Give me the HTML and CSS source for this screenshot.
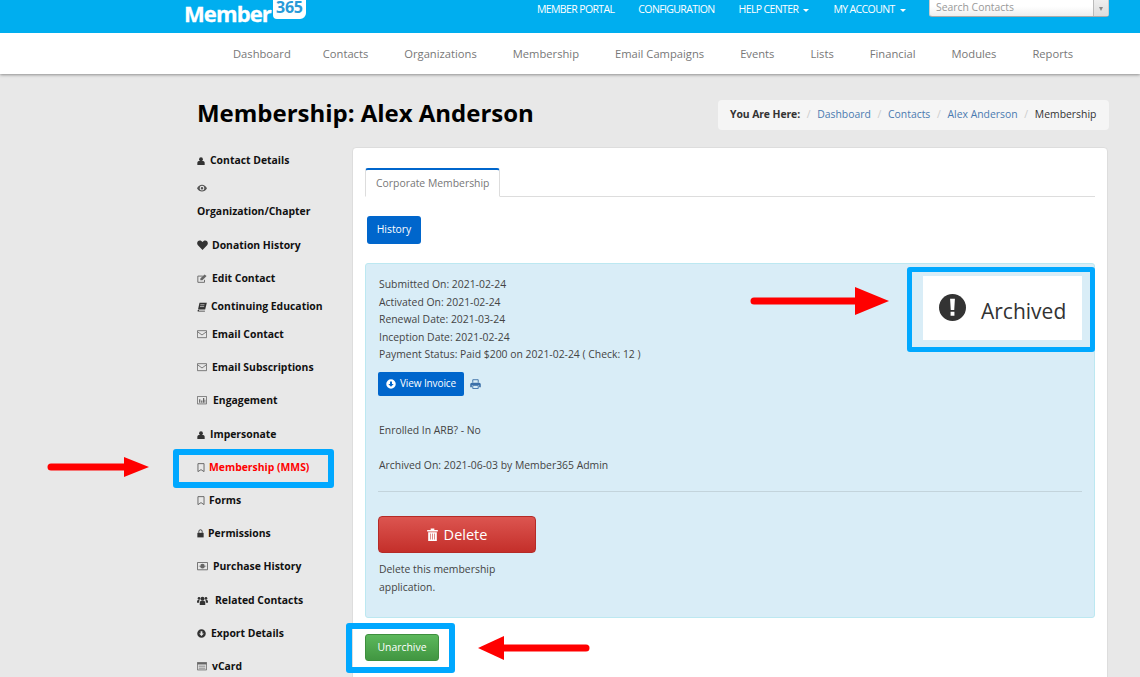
FILE: index.html
```html
<!DOCTYPE html>
<html lang="en">
  <head>
    <meta charset="UTF-8" />
    <title>Membership: Alex Anderson</title>
    <link rel="stylesheet" href="styles.css">
  </head>
  <body>
    <!-- Top bar -->
    <header class="topbar">
      <div class="logo">
        <span class="logo-word">Member</span>
        <span class="logo-badge">365</span>
      </div>
      <ul class="top-links">
        <li>MEMBER PORTAL</li>
        <li>CONFIGURATION</li>
        <li>HELP CENTER <span class="caret"></span></li>
        <li>MY ACCOUNT <span class="caret"></span></li>
      </ul>
      <div class="search-box">
        <span class="search-text">Search Contacts</span>
        <span class="search-btn"><span class="search-caret"></span></span>
      </div>
    </header>

    <!-- Main nav -->
    <nav class="mainnav">
      <a class="first" href="#">Dashboard</a>
      <a href="#">Contacts</a>
      <a href="#">Organizations</a>
      <a href="#">Membership</a>
      <a href="#">Email Campaigns</a>
      <a href="#">Events</a>
      <a href="#">Lists</a>
      <a href="#">Financial</a>
      <a href="#">Modules</a>
      <a href="#">Reports</a>
    </nav>

    <main class="page">
      <div class="page-head">
        <h1>Membership: Alex Anderson</h1>
        <div class="breadcrumb">
          <strong>You Are Here:</strong>
          <span class="sep">/</span><a href="#">Dashboard</a>
          <span class="sep">/</span><a href="#">Contacts</a>
          <span class="sep">/</span><a href="#">Alex Anderson</a>
          <span class="sep">/</span><span>Membership</span>
        </div>
      </div>

      <div class="columns">
        <ul class="sidemenu">
          <li class="tight">
            <svg class="ico w8" viewBox="0 0 12 12"><circle cx="6" cy="3.400" r="2.900"/><path d="M.5 12V9c0-2 1.500-3 3-3h5c1.500 0 3 1 3 3v3z"/></svg>
            <span class="gap5">Contact Details</span>
          </li>
          <li class="stack">
            <svg class="ico w10 dim" viewBox="0 0 12 10"><path d="M0 5c1.500-2.500 3.500-4 6-4s4.500 1.500 6 4c-1.500 2.500-3.500 4-6 4S1.500 7.500 0 5zm6 2.800a2.800 2.800 0 1 0 0-5.600 2.800 2.800 0 0 0 0 5.600zM6 6.500a1.500 1.500 0 1 0 0-3 1.500 1.500 0 0 0 0 3z" fill-rule="evenodd"/></svg>
            <span>Organization/Chapter</span>
          </li>
          <li>
            <svg class="ico w11" viewBox="0 0 12 11"><path d="M6 10.800L1 5.800C-.8 3.500.5.500 3 .5c1.300 0 2.300.7 3 1.700.7-1 1.700-1.700 3-1.700 2.500 0 3.800 3 2 5.300z"/></svg>
            <span class="gap4">Donation History</span>
          </li>
          <li class="tight">
            <svg class="ico w10 grey" viewBox="0 0 12 11"><path d="M9 7v3H1V2.500h6" fill="none" stroke="currentColor" stroke-width="1.100"/><path d="M4 5.500l5-5 2.500 2-5 5H4z"/></svg>
            <span class="gap5">Edit Contact</span>
          </li>
          <li class="tight">
            <svg class="ico w10" viewBox="0 0 12 12"><path d="M3 .8h8.800L9.800 9H1.200zM.8 9.500V11.500h8.700v-1H2.500l-.2-1z"/><path d="M4 3.300h5M3.600 5.500h5" stroke="#e8e8e8" stroke-width=".8"/></svg>
            <span class="gap4">Continuing Education</span>
          </li>
          <li>
            <svg class="ico w10 grey" viewBox="0 0 12 10"><path d="M.5.800h11v8.400H.5zM.5 2l5.500 4 5.500-4" fill="none" stroke="currentColor"/></svg>
            <span class="gap5">Email Contact</span>
          </li>
          <li>
            <svg class="ico w10 grey" viewBox="0 0 12 10"><path d="M.5.800h11v8.400H.5zM.5 2l5.500 4 5.500-4" fill="none" stroke="currentColor"/></svg>
            <span class="gap5">Email Subscriptions</span>
          </li>
          <li class="loose">
            <svg class="ico w10 grey" viewBox="0 0 12 10"><path d="M.5.500h11v9H.5z" fill="none" stroke="currentColor"/><path d="M2.500 4h1.500v4H2.500zM5 5.500h1.500V8H5zM7.200 2.500h1.500V8H7.200zM9.200 4.500h.8V8h-.8z"/></svg>
            <span class="gap6">Engagement</span>
          </li>
          <li>
            <svg class="ico w8" viewBox="0 0 12 12"><circle cx="6" cy="3.400" r="2.900"/><path d="M.5 12V9c0-2 1.500-3 3-3h5c1.500 0 3 1 3 3v3z"/></svg>
            <span class="gap5">Impersonate</span>
          </li>
          <li class="active">
            <svg class="ico w8 grey" viewBox="0 0 10 12"><path d="M1.200.800h7.600v10L5 8.300 1.200 10.800z" fill="none" stroke="currentColor" stroke-width="1.200"/></svg>
            <span class="gap4">Membership (MMS)</span>
          </li>
          <li>
            <svg class="ico w8 grey" viewBox="0 0 10 12"><path d="M1.200.800h7.600v10L5 8.300 1.200 10.800z" fill="none" stroke="currentColor" stroke-width="1.200"/></svg>
            <span class="gap4">Forms</span>
          </li>
          <li>
            <svg class="ico w7" viewBox="0 0 10 12"><path d="M.5 5.500h9V12h-9z"/><path d="M2.600 5.500V3.500a2.400 2.400 0 0 1 4.800 0v2" fill="none" stroke="currentColor" stroke-width="1.300"/></svg>
            <span class="gap4">Permissions</span>
          </li>
          <li class="loose">
            <svg class="ico w11 grey" viewBox="0 0 12 9"><path d="M.5.500h11v8H.5z" fill="none" stroke="currentColor"/><circle cx="6" cy="4.500" r="2.500"/><path d="M2 4h1v1H2zM9 4h1v1H9z"/></svg>
            <span class="gap5">Purchase History</span>
          </li>
          <li>
            <svg class="ico w11" viewBox="0 0 12 10"><circle cx="6" cy="3" r="2.200"/><circle cx="2.200" cy="2.600" r="1.500"/><circle cx="9.800" cy="2.600" r="1.500"/><path d="M3 10V7c0-1 1-1.800 2-1.800h2c1 0 2 .8 2 1.800v3zM0 7.500V6c0-.8.700-1.500 1.500-1.500h1.200L2.200 7.500zM12 7.500V6c0-.8-.7-1.500-1.500-1.500H9.300l.5 3z"/></svg>
            <span class="gap7">Related Contacts</span>
          </li>
          <li>
            <svg class="ico w9" viewBox="0 0 12 12"><path d="M6 .3a5.700 5.700 0 1 1 0 11.400A5.700 5.700 0 0 1 6 .3zM4.800 3v3H2.800L6 9.300 9.200 6h-2V3z" fill-rule="evenodd"/></svg>
            <span class="gap5">Export Details</span>
          </li>
          <li>
            <svg class="ico w10 grey" viewBox="0 0 12 10"><path d="M.5.500h11v9H.5z" fill="none" stroke="currentColor"/><path d="M.5.500h11V3H.5zM2 4.500h8v1H2zM2 6.800h8v1H2z"/></svg>
            <span class="gap5">vCard</span>
          </li>
        </ul>

        <section class="panel">
          <div class="tabs">
            <span class="tab">Corporate Membership</span>
          </div>
          <a class="btn-history" href="#">History</a>

          <div class="info-box">
            <div class="status-card">
              <svg class="status-ico" viewBox="0 0 28 28"><circle cx="14" cy="14" r="14"/><path d="M11.500 5h5l-.7 11.500h-3.600zM12 18.500h4v4h-4z" fill="#fff"/></svg>
              <span class="status-text">Archived</span>
            </div>
            <p class="dates">
              Submitted On: 2021-02-24<br>
              Activated On: 2021-02-24<br>
              Renewal Date: 2021-03-24<br>
              Inception Date: 2021-02-24<br>
              Payment Status: Paid $200 on 2021-02-24 ( Check: 12 )
            </p>
            <div class="invoice-row">
              <a class="btn-invoice" href="#">
                <svg class="btn-ico" viewBox="0 0 12 12"><path d="M6 .3a5.700 5.700 0 1 1 0 11.400A5.700 5.700 0 0 1 6 .3zM4.800 3v3H2.800L6 9.300 9.200 6h-2V3z" fill-rule="evenodd"/></svg>
                View Invoice
              </a>
              <svg class="print-ico" viewBox="0 0 12 11"><path d="M3 4V.8h6V4M3 7h6v3.500H3z" fill="none" stroke="currentColor"/><path d="M2 4h8c1 0 1.800.8 1.800 1.800V9H10V6.500H2V9H.2V5.800C.2 4.800 1 4 2 4z"/></svg>
            </div>
            <p class="note enrolled">Enrolled In ARB? - No</p>
            <p class="note archived">Archived On: 2021-06-03 by Member365 Admin</p>
            <hr class="rule">
            <a class="btn-delete" href="#">
              <svg class="trash-ico" viewBox="0 0 12 14"><path d="M4 2V.5h4V2h3.800v1.800H.2V2zM1.300 4.600h9.400V14H1.300z" fill-rule="evenodd"/><path d="M3.800 6v6.500M6 6v6.500M8.200 6v6.500" stroke="#d0605a" stroke-width=".8"/></svg>
              Delete
            </a>
            <p class="delete-note">Delete this membership<br>application.</p>
          </div>

          <a class="btn-unarchive" href="#">Unarchive</a>
        </section>
      </div>
    </main>

    <!-- Annotations drawn over the screenshot -->
    <div class="mark mark-menu"></div>
    <div class="mark mark-status"></div>
    <div class="mark mark-unarchive"></div>
    <svg class="arrow arrow-menu" viewBox="0 0 102 22"><path d="M4 11h76" stroke="#f00" stroke-width="7" stroke-linecap="round"/><path d="M77 1l25 10-25 10z" fill="#f00"/></svg>
    <svg class="arrow arrow-status" viewBox="0 0 140 30"><path d="M4 15h106" stroke="#f00" stroke-width="7" stroke-linecap="round"/><path d="M105 1l34 14-34 14z" fill="#f00"/></svg>
    <svg class="arrow arrow-unarchive" viewBox="0 0 112 24"><path d="M108 12H26" stroke="#f00" stroke-width="7" stroke-linecap="round"/><path d="M26 0L0 12l26 12z" fill="#f00"/></svg>
  </body>
</html>
```

FILE: styles.css
```css
html, body {
  height: 677px;
  overflow: hidden;
}
body {
  font-family: "Open Sans", sans-serif;
  font-size: 10.4px;
  margin: 0;
  padding: 0;
  background: #e8e8e8;
  color: #333;
  position: relative;
}
a {
  text-decoration: none;
}

/* Top bar */
.topbar {
  display: flex;
  height: 33px;
  background: #00aeef;
  padding-left: 185px;
  padding-right: 31px;
  position: relative;
  z-index: 2;
}
.logo {
  display: flex;
  align-items: flex-start;
  width: 352px;
}
.logo-word {
  color: #fff;
  font-weight: 700;
  font-size: 22px;
  letter-spacing: -0.9px;
  line-height: 24px;
  margin-top: 1px;
  margin-left: -1px;
  -webkit-text-stroke: 0.3px #fff;
}
.logo-badge {
  background: #fff;
  color: #2a9ad8;
  font-weight: 700;
  font-size: 16px;
  line-height: 14px;
  height: 19px;
  margin-left: 2px;
  border-radius: 0 0 6px 4px;
  letter-spacing: -0.3px;
  width: 33px;
  text-align: center;
  box-sizing: border-box;
}
.top-links {
  list-style: none;
  display: flex;
  gap: 24px;
  margin: 0;
  padding: 2px 0 0;
  color: #fff;
  font-size: 10.5px;
  letter-spacing: -0.62px;
  line-height: 14px;
}
.caret {
  display: inline-block;
  border-top: 3px solid #fff;
  border-left: 3px solid transparent;
  border-right: 3px solid transparent;
  vertical-align: middle;
  margin-left: 3px;
}
.search-box {
  margin-left: auto;
  width: 180px;
  height: 17px;
  background: linear-gradient(#fff 40%, #eee);
  border: 1px solid #ccc;
  border-top: 0;
  border-bottom-color: #aaa;
  border-radius: 0 0 3px 3px;
  box-sizing: border-box;
  display: flex;
  justify-content: space-between;
  color: #999;
  line-height: 14px;
  padding-left: 6px;
}
.search-btn {
  width: 14px;
  background: linear-gradient(#eee, #ddd);
  border-left: 1px solid #bbb;
  text-align: center;
}
.search-caret {
  display: inline-block;
  border-top: 4px solid #888;
  border-left: 2px solid transparent;
  border-right: 2px solid transparent;
  vertical-align: 0;
}

/* Main nav */
.mainnav {
  display: flex;
  height: 41px;
  background: #fff;
  box-shadow: 0 1px 3px rgba(0, 0, 0, 0.35), 0 -1px 3px rgba(0, 0, 0, 0.2);
  padding-left: 233px;
  gap: 36px;
  align-items: center;
  box-sizing: border-box;
  position: relative;
  z-index: 1;
}
.mainnav a {
  color: #777;
  font-size: 11.2px;
}
.mainnav .first {
  margin-right: -4px;
}

/* Page */
.page {
  margin-left: 197px;
  width: 912px;
}
.page-head {
  display: flex;
  justify-content: space-between;
  align-items: center;
  padding-top: 26px;
  height: 30px;
}
h1 {
  margin: 0 0 4px;
  color: #000;
  font-size: 24px;
  line-height: 30px;
  font-weight: 700;
  letter-spacing: -0.02px;
}
.breadcrumb {
  display: flex;
  gap: 6.7px;
  background: #f5f5f5;
  border-radius: 4px;
  height: 30px;
  line-height: 28px;
  padding: 0 12px;
  width: 391px;
  box-sizing: border-box;
  white-space: nowrap;
}
.breadcrumb strong {
  letter-spacing: -0.08px;
}
.breadcrumb a {
  color: #4a7ab0;
}
.sep {
  color: #ccc;
}
.columns {
  display: flex;
  margin-top: 17px;
}

/* Side menu */
.sidemenu {
  list-style: none;
  margin: 0;
  padding: 5px 0 0;
  width: 155px;
  color: #111;
  font-weight: 700;
  font-size: 10.4px;
  line-height: 17px;
}
.sidemenu li {
  display: flex;
  align-items: center;
  height: 17px;
  margin-bottom: 16px;
  white-space: nowrap;
}
.sidemenu li.tight {
  margin-bottom: 11px;
}
.sidemenu li.loose {
  margin-bottom: 17px;
}
.sidemenu li.stack {
  display: block;
  height: auto;
  margin-bottom: 17px;
}
.sidemenu li.stack span {
  display: block;
  margin-top: 6px;
}
.sidemenu li.active {
  color: #f00;
}
.ico {
  flex-shrink: 0;
  height: auto;
  fill: #333;
  color: #333;
}
.grey {
  fill: #666;
  color: #666;
}
.dim {
  fill: #555;
  color: #555;
}
.w7 { width: 7px; }
.w8 { width: 8px; }
.w9 { width: 9px; }
.w10 { width: 10px; }
.w11 { width: 11px; }
.gap4 { margin-left: 4px; }
.gap5 { margin-left: 5px; }
.gap6 { margin-left: 6px; }
.gap7 { margin-left: 7px; }

/* Panel */
.panel {
  width: 756px;
  height: 560px;
  box-sizing: border-box;
  background: #fff;
  border: 1px solid #ddd;
  border-radius: 4px;
  padding: 20px 12px 0;
  flex-shrink: 0;
}
.tabs {
  border-bottom: 1px solid #ddd;
  height: 28px;
}
.tab {
  display: inline-block;
  height: 29px;
  box-sizing: border-box;
  border: 1px solid #ddd;
  border-top: 2px solid #06c;
  border-bottom: 1px solid #fff;
  border-radius: 3px 3px 0 0;
  background: #fff;
  color: #777;
  line-height: 26px;
  padding: 0 10px;
}
.btn-history {
  display: block;
  width: 54px;
  height: 28px;
  margin: 19px 0 19px 2px;
  background: #06c;
  border-radius: 3px;
  color: #fff;
  text-align: center;
  line-height: 26px;
}
.info-box {
  background: #d9edf7;
  border: 1px solid #bce8f1;
  border-radius: 3px;
  height: 355px;
  box-sizing: border-box;
  padding: 12px 12px 0 13px;
  line-height: 17.500px;
  color: #444;
}
.status-card {
  float: right;
  display: flex;
  align-items: center;
  width: 159px;
  height: 64px;
  box-sizing: border-box;
  background: #fff;
  padding-left: 16px;
  font-size: 21px;
  color: #333;
}
.status-ico {
  width: 27px;
  height: 27px;
  fill: #333;
  margin-right: 15px;
  margin-bottom: 2px;
}
.status-text {
  padding-top: 8px;
}
.dates {
  margin: 0;
}
.invoice-row {
  display: flex;
  align-items: center;
  margin: 8px 0 0 -1px;
}
.btn-invoice {
  display: flex;
  align-items: center;
  justify-content: center;
  gap: 4px;
  width: 86px;
  height: 24px;
  background: #06c;
  border-radius: 2px;
  color: #fff;
  font-size: 10px;
  letter-spacing: -0.1px;
}
.btn-ico {
  width: 10px;
  height: 10px;
  fill: #fff;
}
.print-ico {
  width: 11px;
  height: 10px;
  margin-left: 6px;
  color: #3b6fa8;
  fill: #3b6fa8;
}
.note {
  margin: 0;
}
.enrolled {
  margin-top: 26px;
}
.archived {
  margin-top: 17.500px;
}
.rule {
  border: 0;
  border-top: 1px solid #c3d4dc;
  margin: 17px 0 0 -1px;
}
.btn-delete {
  display: flex;
  align-items: center;
  justify-content: center;
  gap: 6px;
  width: 158px;
  height: 37px;
  margin: 24px 0 0 -1px;
  background: linear-gradient(#dc5550, #c42f2a);
  border: 1px solid #b52b27;
  border-radius: 4px;
  box-sizing: border-box;
  color: #fff;
  font-size: 14.500px;
}
.trash-ico {
  width: 11px;
  height: 13px;
  fill: #fff;
}
.delete-note {
  margin: 7px 0 0;
  line-height: 18px;
}
.btn-unarchive {
  display: block;
  width: 74px;
  height: 27px;
  margin-top: 16px;
  background: linear-gradient(#5cb85c, #419641);
  border: 1px solid #3e8f3e;
  border-radius: 3px;
  box-sizing: border-box;
  color: #fff;
  text-align: center;
  line-height: 24px;
}

/* Annotations */
.mark {
  position: absolute;
  box-sizing: border-box;
  border: 6px solid #00a8ff;
  border-radius: 3px;
  z-index: 5;
}
.mark-menu {
  left: 173px;
  top: 449px;
  width: 161px;
  height: 39px;
}
.mark-status {
  left: 907px;
  top: 267px;
  width: 188px;
  height: 85px;
  border-width: 5px;
}
.mark-unarchive {
  left: 346px;
  top: 623px;
  width: 109px;
  height: 50px;
}
.arrow {
  position: absolute;
  z-index: 5;
}
.arrow-menu {
  left: 47px;
  top: 456px;
  width: 102px;
  height: 22px;
}
.arrow-status {
  left: 750px;
  top: 286px;
  width: 140px;
  height: 30px;
}
.arrow-unarchive {
  left: 478px;
  top: 636px;
  width: 112px;
  height: 24px;
}
```
